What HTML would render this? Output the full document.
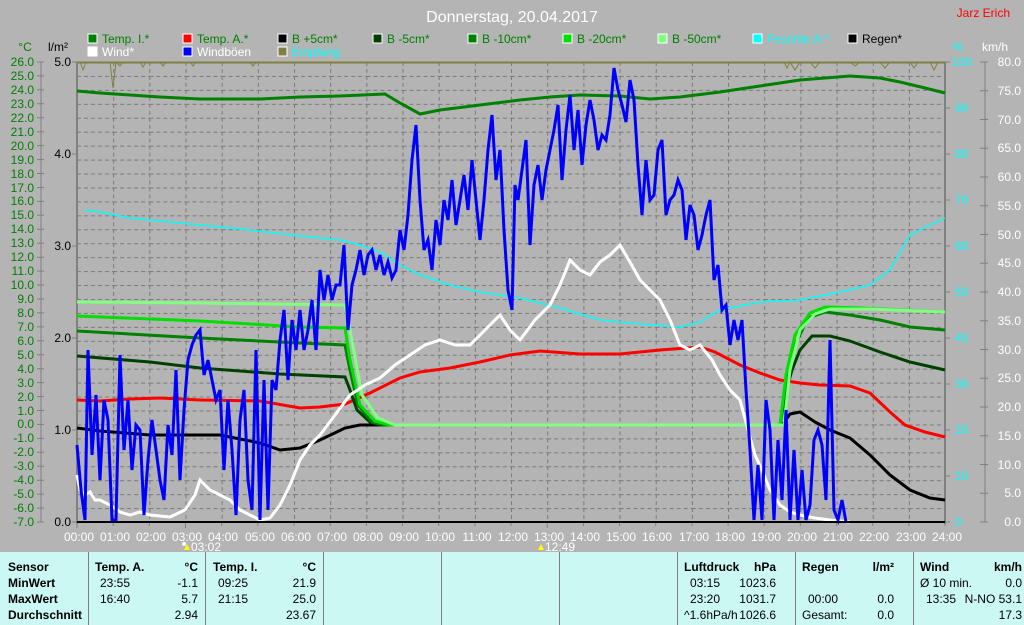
<!DOCTYPE html>
<html><head><meta charset="utf-8"><style>
html,body{margin:0;padding:0;width:1024px;height:625px;overflow:hidden;background:#b4b4b4;font-family:"Liberation Sans",sans-serif;}
svg text{font-family:"Liberation Sans",sans-serif;}
.tbl{position:absolute;left:0;top:552px;width:1024px;height:73px;background:#ccf8f4;font-size:12px;}
.tbl div{position:absolute;white-space:nowrap;}
.b{font-weight:bold;}
.vl{position:absolute;top:0;width:1px;height:73px;background:#808080;}
</style></head><body>
<svg width="1024" height="552" style="position:absolute;left:0;top:0">
<defs>
<pattern id="g" patternUnits="userSpaceOnUse" x="77" y="62" width="36.17" height="13.94">
<line x1="0" y1="0.5" x2="36.17" y2="0.5" stroke="#7a7a7a" stroke-dasharray="4,3"/>
<line x1="0.5" y1="0" x2="0.5" y2="13.94" stroke="#7a7a7a" stroke-dasharray="4,3"/>
</pattern>
</defs>
<rect x="77" y="62" width="868" height="460" fill="url(#g)"/>
<text x="512" y="22" fill="#fff" font-size="16" text-anchor="middle">Donnerstag, 20.04.2017</text>
<text x="1010" y="17" fill="#f00" font-size="12" text-anchor="end">Jarz Erich</text>
<g font-size="12">
<rect x="88" y="34" width="9" height="9" fill="#008000" stroke="#fff"/><text x="102" y="43" fill="#008000">Temp. I.*</text>
<rect x="183" y="34" width="9" height="9" fill="#f00" stroke="#fff"/><text x="197" y="43" fill="#008000">Temp. A.*</text>
<rect x="278" y="34" width="9" height="9" fill="#000" stroke="#fff"/><text x="292" y="43" fill="#008000">B +5cm*</text>
<rect x="373" y="34" width="9" height="9" fill="#004000" stroke="#fff"/><text x="387" y="43" fill="#008000">B -5cm*</text>
<rect x="468" y="34" width="9" height="9" fill="#008000" stroke="#fff"/><text x="482" y="43" fill="#008000">B -10cm*</text>
<rect x="563" y="34" width="9" height="9" fill="#00e000" stroke="#fff"/><text x="577" y="43" fill="#008000">B -20cm*</text>
<rect x="658" y="34" width="9" height="9" fill="#80ff80" stroke="#fff"/><text x="672" y="43" fill="#008000">B -50cm*</text>
<rect x="753" y="34" width="9" height="9" fill="#00ffff" stroke="#fff"/><text x="767" y="43" fill="#00ffff">Feuchte A.*</text>
<rect x="848" y="34" width="9" height="9" fill="#000" stroke="#fff"/><text x="862" y="43" fill="#000">Regen*</text>
<rect x="88" y="47" width="9" height="9" fill="#fff" stroke="#fff"/><text x="102" y="56" fill="#fff">Wind*</text>
<rect x="183" y="47" width="9" height="9" fill="#00f" stroke="#fff"/><text x="197" y="56" fill="#fff">Windböen</text>
<rect x="278" y="47" width="9" height="9" fill="#808040" stroke="#fff"/><text x="292" y="56" fill="#00ffff">Empfang</text>
<text x="25" y="51" fill="#008000" text-anchor="middle">°C</text>
<text x="58" y="51" fill="#000" text-anchor="middle">l/m²</text>
<text x="958" y="51" fill="#00ffff" text-anchor="middle">%</text>
<text x="995" y="51" fill="#fff" text-anchor="middle">km/h</text>
</g>
<!-- left axes -->
<line x1="41" y1="62" x2="41" y2="522" stroke="#808080"/>
<line x1="77" y1="62" x2="77" y2="524" stroke="#808080" stroke-width="2"/>
<line x1="945" y1="62" x2="945" y2="524" stroke="#808080" stroke-width="2"/>
<line x1="985" y1="62" x2="985" y2="522" stroke="#808080"/>
<g font-size="12" fill="#008000" text-anchor="end">
<text x="34" y="66">26.0</text><text x="34" y="80">25.0</text><text x="34" y="94">24.0</text><text x="34" y="108">23.0</text><text x="34" y="122">22.0</text><text x="34" y="136">21.0</text><text x="34" y="150">20.0</text><text x="34" y="164">19.0</text><text x="34" y="178">18.0</text><text x="34" y="192">17.0</text><text x="34" y="205">16.0</text><text x="34" y="219">15.0</text><text x="34" y="233">14.0</text><text x="34" y="247">13.0</text><text x="34" y="261">12.0</text><text x="34" y="275">11.0</text><text x="34" y="289">10.0</text><text x="34" y="303">9.0</text><text x="34" y="317">8.0</text><text x="34" y="331">7.0</text><text x="34" y="345">6.0</text><text x="34" y="359">5.0</text><text x="34" y="373">4.0</text><text x="34" y="387">3.0</text><text x="34" y="401">2.0</text><text x="34" y="415">1.0</text><text x="34" y="428">0.0</text><text x="34" y="442">-1.0</text><text x="34" y="456">-2.0</text><text x="34" y="470">-3.0</text><text x="34" y="484">-4.0</text><text x="34" y="498">-5.0</text><text x="34" y="512">-6.0</text><text x="34" y="526">-7.0</text>
</g>
<g stroke="#808080">
<path d="M37 62h7M37 75.9h7M37 89.9h7M37 103.8h7M37 117.8h7M37 131.7h7M37 145.6h7M37 159.6h7M37 173.5h7M37 187.5h7M37 201.4h7M37 215.3h7M37 229.3h7M37 243.2h7M37 257.2h7M37 271.1h7M37 285h7M37 299h7M37 312.9h7M37 326.9h7M37 340.8h7M37 354.7h7M37 368.7h7M37 382.6h7M37 396.6h7M37 410.5h7M37 424.4h7M37 438.4h7M37 452.3h7M37 466.3h7M37 480.2h7M37 494.1h7M37 508.1h7M37 522h7"/>
<path d="M72 62h5M72 154h5M72 246h5M72 338h5M72 430h5M72 522h5"/>
<path d="M945 62h5M945 108h5M945 154h5M945 200h5M945 246h5M945 292h5M945 338h5M945 384h5M945 430h5M945 476h5M945 522h5"/>
<path d="M980 62h8M980 90.75h8M980 119.5h8M980 148.25h8M980 177h8M980 205.75h8M980 234.5h8M980 263.25h8M980 292h8M980 320.75h8M980 349.5h8M980 378.25h8M980 407h8M980 435.75h8M980 464.5h8M980 493.25h8M980 522h8"/>
<path d="M77 522v6M113.2 522v4M149.3 522v4M185.5 522v6M221.7 522v4M257.9 522v4M294 522v4M330.2 522v4M366.4 522v4M402.5 522v4M438.7 522v4M474.9 522v4M511 522v4M547.2 522v6M583.4 522v4M619.6 522v4M655.7 522v4M691.9 522v4M728.1 522v4M764.2 522v4M800.4 522v4M836.6 522v4M872.7 522v4M908.9 522v4M945 522v4"/>
</g>
<g font-size="12" fill="#000" text-anchor="end">
<text x="71" y="66">5.0</text><text x="71" y="158">4.0</text><text x="71" y="250">3.0</text><text x="71" y="342">2.0</text><text x="71" y="434">1.0</text><text x="71" y="526">0.0</text>
</g>
<g font-size="12" fill="#00ffff" text-anchor="start">
<text x="952" y="66">100</text><text x="955" y="112">90</text><text x="955" y="158">80</text><text x="955" y="204">70</text><text x="955" y="250">60</text><text x="955" y="296">50</text><text x="955" y="342">40</text><text x="955" y="388">30</text><text x="955" y="434">20</text><text x="955" y="480">10</text><text x="955" y="526">0</text>
</g>
<g font-size="12" fill="#fff" text-anchor="end">
<text x="1021" y="66">80.0</text><text x="1021" y="95">75.0</text><text x="1021" y="124">70.0</text><text x="1021" y="152">65.0</text><text x="1021" y="181">60.0</text><text x="1021" y="210">55.0</text><text x="1021" y="239">50.0</text><text x="1021" y="267">45.0</text><text x="1021" y="296">40.0</text><text x="1021" y="325">35.0</text><text x="1021" y="354">30.0</text><text x="1021" y="382">25.0</text><text x="1021" y="411">20.0</text><text x="1021" y="440">15.0</text><text x="1021" y="469">10.0</text><text x="1021" y="497">5.0</text><text x="1021" y="526">0.0</text>
</g>
<g font-size="12" fill="#fff" text-anchor="middle">
<text x="79" y="541">00:00</text><text x="115" y="541">01:00</text><text x="151" y="541">02:00</text><text x="187" y="541">03:00</text><text x="223" y="541">04:00</text><text x="260" y="541">05:00</text><text x="296" y="541">06:00</text><text x="332" y="541">07:00</text><text x="368" y="541">08:00</text><text x="404" y="541">09:00</text><text x="440" y="541">10:00</text><text x="477" y="541">11:00</text><text x="513" y="541">12:00</text><text x="549" y="541">13:00</text><text x="585" y="541">14:00</text><text x="621" y="541">15:00</text><text x="657" y="541">16:00</text><text x="694" y="541">17:00</text><text x="730" y="541">18:00</text><text x="766" y="541">19:00</text><text x="802" y="541">20:00</text><text x="838" y="541">21:00</text><text x="874" y="541">22:00</text><text x="911" y="541">23:00</text><text x="947" y="541">24:00</text>
<text x="206" y="551">03:02</text><text x="560" y="551">12:49</text>
</g>
<path d="M187 544l3 6h-6z" fill="#ff0"/><circle cx="184" cy="544" r="2" fill="#fff"/>
<path d="M541 544l3 6h-6z" fill="#ff0"/>
<!-- Empfang -->
<polyline fill="none" stroke="#808040" points="77,62 80,62 83,70 86,62 110,62 113,88 116,62 120,66 123,62 140,62 143,67 146,62 160,62 163,66 166,62 190,62 193,66 196,62 250,62 253,66 256,62 280,62 784,62 787,68 790,62 795,70 800,62 810,62 815,68 820,62 850,62 855,66 860,62 880,62 885,68 890,62 910,62 914,68 918,62 930,62 934,70 938,62 945,62"/>
<line x1="77" y1="62.5" x2="945" y2="62.5" stroke="#808040" stroke-width="2"/>
<!-- humidity -->
<polyline fill="none" stroke="#00ffff" stroke-width="1.5" points="85,210 100,212 130,218 170,222 200,225 250,230 300,236 340,240 360,245 380,252 400,265 420,275 450,285 480,292 520,298 560,308 600,320 640,324 680,327 700,322 720,310 760,302 800,300 840,292 870,285 890,270 910,235 930,225 945,218"/>
<!-- Temp I -->
<polyline fill="none" stroke="#008000" stroke-width="3" points="77,91 100,93 130,95 160,97 200,99 260,99 300,97 340,96 385,94 400,103 420,114 440,110 480,105 520,100 550,97 580,95 620,96 650,99 680,97 720,92 760,86 800,80 850,76 880,78 900,82 925,88 945,93"/>
<!-- Temp A -->
<polyline fill="none" stroke="#f00" stroke-width="3" points="77,400 100,401 130,399 160,398 200,400 260,401 300,408 320,407 345,404 370,393 400,378 420,372 450,368 480,362 510,355 540,351 580,354 620,354 660,350 700,347 715,352 740,365 760,373 780,380 800,383 820,385 850,386 870,393 890,412 905,425 925,432 945,437"/>
<!-- B +5 -->
<polyline fill="none" stroke="#000" stroke-width="3" points="77,428 100,431 150,435 220,435 260,443 280,450 300,448 320,440 345,428 360,425 380,425 782,425 790,414 800,412 815,422 830,430 850,438 870,455 890,475 910,490 930,498 945,500"/>
<!-- B -5 -->
<polyline fill="none" stroke="#004000" stroke-width="3" points="77,356 150,362 200,368 280,374 345,377 350,390 357,410 370,422 380,425 780,425 785,395 792,370 800,350 812,336 830,336 850,341 880,352 910,362 945,370"/>
<!-- B -10 -->
<polyline fill="none" stroke="#008000" stroke-width="3" points="77,331 200,338 300,343 345,345 350,370 358,405 372,422 385,425 780,425 786,380 795,345 808,318 825,312 850,315 880,320 910,327 945,330"/>
<!-- B -20 -->
<polyline fill="none" stroke="#00e000" stroke-width="3" points="77,316 200,321 300,327 345,328 350,360 360,405 375,421 390,425 780,425 786,375 795,335 810,313 825,307 860,308 945,312"/>
<!-- B -50 -->
<polyline fill="none" stroke="#80ff80" stroke-width="3" points="77,302 200,303 345,305 350,330 362,395 378,418 395,425 784,425 790,370 800,330 815,314 830,309 870,309 945,312"/>
<!-- Wind -->
<polyline fill="none" stroke="#fff" stroke-width="3" points="77,475 80,490 85,495 90,492 95,500 100,500 110,505 120,512 130,515 140,512 150,515 170,517 185,510 195,495 200,480 210,490 220,495 230,500 240,510 250,515 260,520 270,518 280,505 290,485 300,460 310,445 320,435 335,415 350,395 365,385 380,378 395,365 410,355 425,345 440,340 455,345 470,345 485,330 500,315 510,330 520,340 535,320 550,305 560,285 570,260 580,270 590,275 600,262 610,255 620,245 630,262 640,280 650,290 660,300 670,320 680,345 690,350 700,345 712,360 720,375 730,390 740,400 748,430 755,455 762,470 770,490 780,505 790,512 800,515 815,518 830,520 850,522"/>
<!-- Windböen -->
<polyline fill="none" stroke="#00f" stroke-width="3" stroke-linejoin="miter" points="77,445 81,490 85,520 88,350 92,455 96,395 100,480 104,400 108,420 112,520 116,520 120,355 124,450 128,400 132,470 136,425 140,430 144,515 148,460 152,420 156,450 160,480 164,500 168,425 172,455 176,370 180,480 184,410 188,360 192,345 196,335 200,330 204,375 208,360 212,380 216,400 220,390 224,470 228,400 232,450 236,515 240,420 244,390 248,480 252,510 256,350 260,520 264,380 268,510 272,380 276,390 280,340 284,310 288,380 292,320 296,350 300,310 304,350 308,330 312,300 316,350 320,270 324,300 328,275 332,300 336,285 340,285 344,245 348,330 352,285 356,270 360,250 364,275 368,255 372,250 376,270 380,255 384,275 388,262 392,278 396,270 400,230 404,250 408,215 412,160 416,125 420,200 424,250 428,240 432,270 436,220 440,245 444,200 448,220 452,180 456,225 460,200 464,175 468,210 472,160 476,200 480,240 484,200 488,150 492,115 496,180 500,150 504,230 508,290 512,310 515,185 518,200 522,170 526,140 530,245 534,185 538,165 542,200 546,170 550,150 554,130 558,105 562,180 566,130 570,95 574,150 578,110 582,165 586,125 590,100 594,120 598,150 602,135 606,140 610,115 614,68 618,90 622,105 626,122 630,80 634,100 638,165 642,215 646,160 650,200 654,195 658,150 662,140 666,215 670,200 674,195 678,180 682,190 686,240 690,205 694,215 698,250 702,235 706,215 710,200 714,280 718,265 722,310 726,305 730,345 734,320 738,340 742,320 746,390 750,450 754,520 758,465 762,520 766,400 770,430 774,520 778,440 782,500 786,410 790,520 794,450 798,520 802,470 806,520 810,505 814,440 818,430 822,445 826,500 830,340 834,510 838,520 842,500 846,522"/>
<line x1="77" y1="522" x2="945" y2="522" stroke="#000" stroke-width="2"/>
</svg>
<div class="tbl">
<div class="vl" style="left:88px"></div><div class="vl" style="left:205px"></div><div class="vl" style="left:323px"></div><div class="vl" style="left:441px"></div><div class="vl" style="left:559px"></div><div class="vl" style="left:677px"></div><div class="vl" style="left:795px"></div><div class="vl" style="left:913px"></div>
<div class="b" style="left:8px;top:8px">Sensor</div>
<div class="b" style="left:8px;top:24px">MinWert</div>
<div class="b" style="left:8px;top:40px">MaxWert</div>
<div class="b" style="left:8px;top:56px">Durchschnitt</div>
<div class="b" style="left:95px;top:8px">Temp. A.</div><div class="b" style="right:826px;top:8px">°C</div>
<div style="left:100px;top:24px">23:55</div><div style="right:826px;top:24px">-1.1</div>
<div style="left:100px;top:40px">16:40</div><div style="right:826px;top:40px">5.7</div>
<div style="right:826px;top:56px">2.94</div>
<div class="b" style="left:213px;top:8px">Temp. I.</div><div class="b" style="right:708px;top:8px">°C</div>
<div style="left:218px;top:24px">09:25</div><div style="right:708px;top:24px">21.9</div>
<div style="left:218px;top:40px">21:15</div><div style="right:708px;top:40px">25.0</div>
<div style="right:708px;top:56px">23.67</div>
<div class="b" style="left:684px;top:8px">Luftdruck</div><div class="b" style="right:248px;top:8px">hPa</div>
<div style="left:690px;top:24px">03:15</div><div style="right:248px;top:24px">1023.6</div>
<div style="left:690px;top:40px">23:20</div><div style="right:248px;top:40px">1031.7</div>
<div style="left:684px;top:56px">^1.6hPa/h</div><div style="right:248px;top:56px">1026.6</div>
<div class="b" style="left:802px;top:8px">Regen</div><div class="b" style="right:130px;top:8px">l/m²</div>
<div style="left:808px;top:40px">00:00</div><div style="right:130px;top:40px">0.0</div>
<div style="left:802px;top:56px">Gesamt:</div><div style="right:130px;top:56px">0.0</div>
<div class="b" style="left:920px;top:8px">Wind</div><div class="b" style="right:2px;top:8px">km/h</div>
<div style="left:920px;top:24px">Ø 10 min.</div><div style="right:2px;top:24px">0.0</div>
<div style="left:926px;top:40px">13:35</div><div style="right:2px;top:40px">N-NO 53.1</div>
<div style="right:2px;top:56px">17.3</div>
</div>
</body></html>
